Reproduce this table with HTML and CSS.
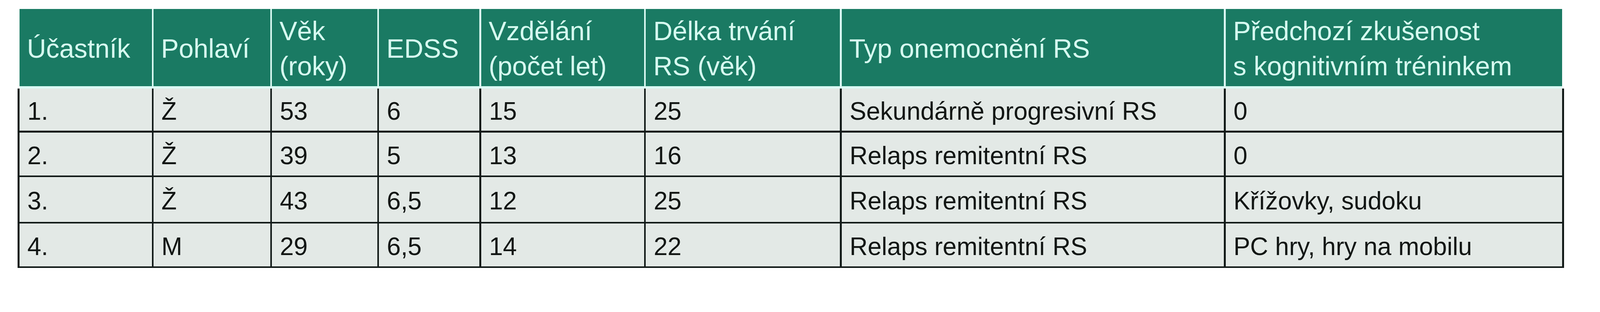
FILE: index.html
```html
<!DOCTYPE html>
<html lang="cs">
<head>
<meta charset="utf-8">
<title>Charakteristika účastníků</title>
<link rel="stylesheet" href="styles.css">
</head>
<body>
<div class="data" role="table">
  <div class="row head" role="row">
    <div class="cell" role="columnheader">Účastník</div>
    <div class="cell" role="columnheader">Pohlaví</div>
    <div class="cell" role="columnheader">Věk<br>(roky)</div>
    <div class="cell" role="columnheader">EDSS</div>
    <div class="cell" role="columnheader">Vzdělání<br>(počet let)</div>
    <div class="cell" role="columnheader">Délka trvání<br>RS (věk)</div>
    <div class="cell" role="columnheader">Typ onemocnění RS</div>
    <div class="cell" role="columnheader">Předchozí zkušenost<br>s kognitivním tréninkem</div>
  </div>
  <div class="row body r1" role="row">
    <div class="cell" role="cell">1.</div>
    <div class="cell" role="cell">Ž</div>
    <div class="cell" role="cell">53</div>
    <div class="cell" role="cell">6</div>
    <div class="cell" role="cell">15</div>
    <div class="cell" role="cell">25</div>
    <div class="cell" role="cell">Sekundárně progresivní RS</div>
    <div class="cell" role="cell">0</div>
  </div>
  <div class="row body r2" role="row">
    <div class="cell" role="cell">2.</div>
    <div class="cell" role="cell">Ž</div>
    <div class="cell" role="cell">39</div>
    <div class="cell" role="cell">5</div>
    <div class="cell" role="cell">13</div>
    <div class="cell" role="cell">16</div>
    <div class="cell" role="cell">Relaps remitentní RS</div>
    <div class="cell" role="cell">0</div>
  </div>
  <div class="row body r3" role="row">
    <div class="cell" role="cell">3.</div>
    <div class="cell" role="cell">Ž</div>
    <div class="cell" role="cell">43</div>
    <div class="cell" role="cell">6,5</div>
    <div class="cell" role="cell">12</div>
    <div class="cell" role="cell">25</div>
    <div class="cell" role="cell">Relaps remitentní RS</div>
    <div class="cell" role="cell">Křížovky, sudoku</div>
  </div>
  <div class="row body r4" role="row">
    <div class="cell" role="cell">4.</div>
    <div class="cell" role="cell">M</div>
    <div class="cell" role="cell">29</div>
    <div class="cell" role="cell">6,5</div>
    <div class="cell" role="cell">14</div>
    <div class="cell" role="cell">22</div>
    <div class="cell" role="cell">Relaps remitentní RS</div>
    <div class="cell" role="cell">PC hry, hry na mobilu</div>
  </div>
</div>
</body>
</html>
```

FILE: styles.css
```css
html, body {
  margin: 0;
  padding: 0;
  background: #ffffff;
}

body {
  padding: 22.6px 0 0 45.2px;
  font-family: "Liberation Sans", Arial, sans-serif;
}

.data {
  width: 3958.6px;
  color: #121614;
}

.row {
  display: grid;
  grid-template-columns: 338.8px 298.4px 269.2px 256.9px 416.9px 496.9px 977.9px 861.2px;
  column-gap: 4.7px;
}

.cell {
  display: flex;
  align-items: center;
  white-space: nowrap;
  min-width: 0;
}

/* header */
.head {
  margin: 0 4.7px;
  height: 198.6px;
  background: #dcfbf4;
  border-bottom: 6.6px solid #dcfbf4;
}

.head .cell {
  background: #1a7a63;
  color: #d6fbf0;
  font-size: 68px;
  line-height: 90px;
  padding: 5px 0 0 19px;
}

/* body rows */
.body {
  background: #121a18;
  padding: 0 4.7px;
  border-bottom: 4.7px solid #121a18;
}

.body .cell {
  background: #e3e9e6;
  font-size: 64px;
  padding: 8px 0 0 20px;
}

.r1 { height: 108.2px; border-bottom-width: 5.6px; }
.r2 { height: 109.2px; }
.r3 { height: 115.8px; }
.r4 { height: 109.2px; }
```
